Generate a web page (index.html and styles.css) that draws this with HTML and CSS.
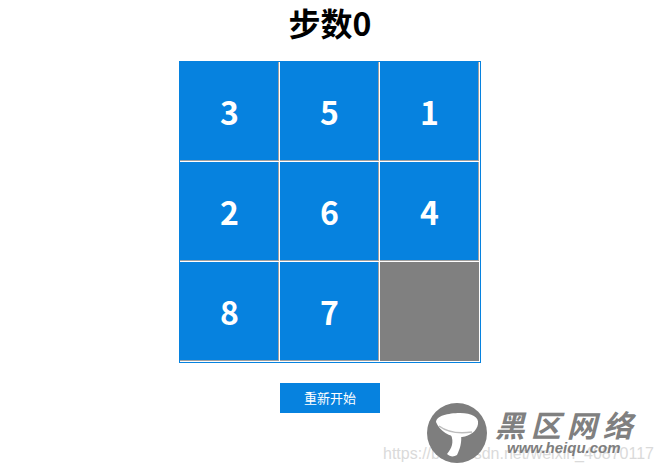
FILE: index.html
```html
<!DOCTYPE html>
<html lang="zh">
<head>
<meta charset="utf-8">
<title>步数</title>
<link rel="stylesheet" href="styles.css">
</head>
<body>
<main class="page">
  <h1 class="title">步数0</h1>
  <div class="board">
    <div class="cell">3</div>
    <div class="cell">5</div>
    <div class="cell">1</div>
    <div class="cell">2</div>
    <div class="cell">6</div>
    <div class="cell">4</div>
    <div class="cell">8</div>
    <div class="cell">7</div>
    <div class="cell empty"></div>
  </div>
  <button class="restart" type="button">重新开始</button>
</main>
<div class="watermark">
  <span class="wm-url">https://blog.csdn.net/weixin_40870117</span>
  <svg class="wm-logo" width="62" height="62" viewBox="0 0 62 62">
    <circle cx="31" cy="31" r="30" fill="#7e7e7e"/>
    <path d="M10 20 C10 14 22 11 34 11 C46 11 53 15 52 22 C51 29 44 34 36 35 C25 36 14 30 10 20 Z" fill="#fff"/>
    <path d="M13 24 C21 30 32 32 46 30" stroke="#bdbdbd" stroke-width="1.5" fill="none"/>
    <path d="M25 33 C28 40 26 46 21 52 C24 55 28 55 31 53 C34 47 36 40 35 33 Z" fill="#fff"/>
  </svg>
  <span class="wm-name">黑区网络</span>
  <span class="wm-site">www.heiqu.com</span>
</div>
</body>
</html>
```
FILE: styles.css
```css
html, body {
  margin: 0;
  padding: 0;
  background: #fff;
}
body {
  width: 660px;
  height: 471px;
  overflow: hidden;
  position: relative;
  font-family: "Noto Sans CJK SC", "Liberation Sans", sans-serif;
}
.page {
  display: flex;
  flex-direction: column;
  align-items: center;
}
.title {
  margin: 0;
  font-size: 32px;
  line-height: 44px;
  font-weight: 700;
  color: #000;
}
.board {
  margin-top: 17px;
  width: 300px;
  height: 300px;
  border: 1px solid #0682df;
  display: grid;
  grid-template-columns: repeat(3, 100px);
  grid-template-rows: repeat(3, 100px);
}
.cell {
  box-sizing: border-box;
  background: #0682df;
  border-right: 1px solid #fff;
  border-bottom: 1px solid #fff;
  box-shadow: inset -1px -1px 0 #a0a0a0;
  display: flex;
  align-items: center;
  justify-content: center;
  color: #fff;
  font-size: 32px;
  font-weight: 700;
  line-height: 1;
  padding-bottom: 2px;
}
.cell.empty {
  background: #808080;
  box-shadow: none;
}
.restart {
  margin-top: 20px;
  width: 100px;
  height: 30px;
  border: 0;
  padding: 0;
  background: #0682df;
  color: #fff;
  font-family: "Noto Sans CJK SC", sans-serif;
  font-size: 13px;
  line-height: 30px;
}
.watermark {
  position: absolute;
  left: 0;
  top: 0;
  width: 660px;
  height: 471px;
  pointer-events: none;
}
.wm-url {
  position: absolute;
  left: 383px;
  top: 444px;
  font-family: "Liberation Sans", sans-serif;
  font-size: 16px;
  line-height: 20px;
  color: #dadada;
  white-space: nowrap;
}
.wm-logo {
  position: absolute;
  left: 426px;
  top: 402px;
}
.wm-name {
  position: absolute;
  left: 498px;
  top: 404px;
  font-family: "Noto Sans CJK SC", sans-serif;
  font-size: 30px;
  font-weight: 700;
  line-height: 40px;
  letter-spacing: 6px;
  color: #808080;
  transform: skewX(-14deg);
  white-space: nowrap;
}
.wm-site {
  position: absolute;
  left: 507px;
  top: 439px;
  font-family: "Liberation Sans", sans-serif;
  font-size: 15px;
  font-weight: 700;
  font-style: italic;
  line-height: 18px;
  color: #7e7e7e;
  white-space: nowrap;
}
```
